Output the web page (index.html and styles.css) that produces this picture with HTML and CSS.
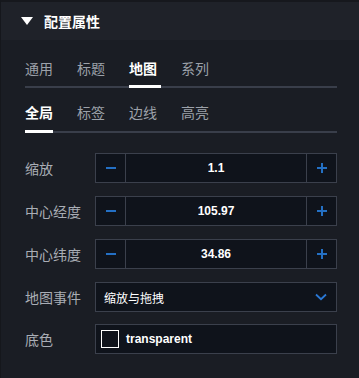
FILE: index.html
```html
<!DOCTYPE html>
<html lang="zh-CN">
<head>
  <meta charset="UTF-8">
  <meta name="viewport" content="width=device-width, initial-scale=1.0">
  <title>配置属性</title>
  <link rel="stylesheet" href="styles.css">
</head>
<body>
  <div class="panel">
    <div class="panel-header">
      <span class="caret"></span>
      <span class="panel-title">配置属性</span>
    </div>

    <div class="tabs tabs-main">
      <div class="tab">通用</div>
      <div class="tab">标题</div>
      <div class="tab active wide">地图</div>
      <div class="tab">系列</div>
    </div>

    <div class="tabs tabs-sub">
      <div class="tab active">全局</div>
      <div class="tab">标签</div>
      <div class="tab">边线</div>
      <div class="tab">高亮</div>
    </div>

    <div class="form">
      <div class="form-row">
        <label class="form-label">缩放</label>
        <div class="field stepper">
          <button class="step-btn minus"><span></span></button>
          <div class="step-value">1.1</div>
          <button class="step-btn plus"><span></span></button>
        </div>
      </div>

      <div class="form-row">
        <label class="form-label">中心经度</label>
        <div class="field stepper">
          <button class="step-btn minus"><span></span></button>
          <div class="step-value">105.97</div>
          <button class="step-btn plus"><span></span></button>
        </div>
      </div>

      <div class="form-row">
        <label class="form-label">中心纬度</label>
        <div class="field stepper">
          <button class="step-btn minus"><span></span></button>
          <div class="step-value">34.86</div>
          <button class="step-btn plus"><span></span></button>
        </div>
      </div>

      <div class="form-row">
        <label class="form-label">地图事件</label>
        <div class="field select">
          <span class="select-text">缩放与拖拽</span>
          <svg class="chevron" width="12" height="8" viewBox="0 0 12 8">
            <path d="M1 1.5 L6 6.2 L11 1.5" fill="none" stroke="#2a78d6" stroke-width="1.8"/>
          </svg>
        </div>
      </div>

      <div class="form-row last">
        <label class="form-label">底色</label>
        <div class="field color">
          <span class="swatch"></span>
          <span class="color-text">transparent</span>
        </div>
      </div>
    </div>
  </div>
</body>
</html>
```

FILE: styles.css
```css
* {
  box-sizing: border-box;
}

body {
  margin: 0;
  background-color: #1a1d24;
  font-family: "Noto Sans CJK SC", "Liberation Sans", sans-serif;
}

.panel {
  height: 378px;
  border-top: 2px solid #16181d;
  border-left: 1px solid #15171c;
  background-color: #1a1d24;
}

.panel-header {
  height: 38px;
  background-color: #1f2229;
  display: flex;
  align-items: center;
  padding-left: 20px;
}

.caret {
  width: 0;
  height: 0;
  border-left: 6px solid transparent;
  border-right: 6px solid transparent;
  border-top: 8px solid #ffffff;
  margin-right: 11px;
}

.panel-title {
  color: #ffffff;
  font-size: 14px;
  font-weight: bold;
  line-height: 20px;
}

.tabs {
  display: flex;
  gap: 24px;
  margin-left: 24px;
  width: 312px;
  border-bottom: 2px solid #393e4a;
}

.tabs-main {
  margin-top: 18px;
}

.tabs-sub {
  margin-top: 14px;
}

.tab {
  position: relative;
  color: #9ca1a9;
  font-size: 14px;
  line-height: 20px;
  padding-bottom: 8px;
}

.tabs-sub .tab {
  padding-bottom: 9px;
}

.tab.active {
  color: #ffffff;
  font-weight: bold;
}

.tab.active::after {
  content: "";
  position: absolute;
  left: 0;
  bottom: -2px;
  width: 28px;
  height: 3px;
  background-color: #ffffff;
}

.tab.wide::after {
  width: 32px;
}

.form {
  display: flex;
  flex-direction: column;
  gap: 13px;
  margin-top: 20px;
  padding-left: 24px;
}

.form-row {
  display: flex;
  align-items: center;
}

.form-row.last {
  margin-top: -1px;
}

.form-label {
  width: 70px;
  color: #a9adb5;
  font-size: 14px;
  line-height: 20px;
}

.field {
  width: 242px;
  height: 30px;
  border: 1px solid #3b404c;
  background-color: #0f131b;
  display: flex;
  align-items: center;
}

.step-btn {
  width: 30px;
  height: 28px;
  padding: 0;
  border: none;
  background: none;
  display: flex;
  align-items: center;
  justify-content: center;
  position: relative;
}

.step-btn.minus {
  border-right: 1px solid #3b404c;
}

.step-btn.plus {
  border-left: 1px solid #3b404c;
}

.step-btn span {
  display: block;
  width: 10px;
  height: 2px;
  background-color: #2470c4;
}

.step-btn.plus span::after {
  content: "";
  position: absolute;
  left: 50%;
  top: 50%;
  width: 2px;
  height: 10px;
  margin-left: -1px;
  margin-top: -5px;
  background-color: #2470c4;
}

.step-btn.plus span {
  margin-left: 1px;
}

.step-value {
  flex: 1;
  text-align: center;
  color: #ffffff;
  font-family: "Liberation Sans", "Noto Sans CJK SC", sans-serif;
  font-weight: bold;
  font-size: 12px;
}

.select {
  justify-content: space-between;
  padding: 0 8px 0 8px;
}

.select-text {
  color: #ffffff;
  font-size: 12px;
}

.chevron {
  margin-right: 1px;
}

.color {
  padding-left: 5px;
  gap: 7px;
}

.swatch {
  width: 18px;
  height: 18px;
  border: 1px solid #ffffff;
}

.color-text {
  color: #ffffff;
  font-family: "Liberation Sans", "Noto Sans CJK SC", sans-serif;
  font-weight: bold;
  font-size: 12px;
}
```
